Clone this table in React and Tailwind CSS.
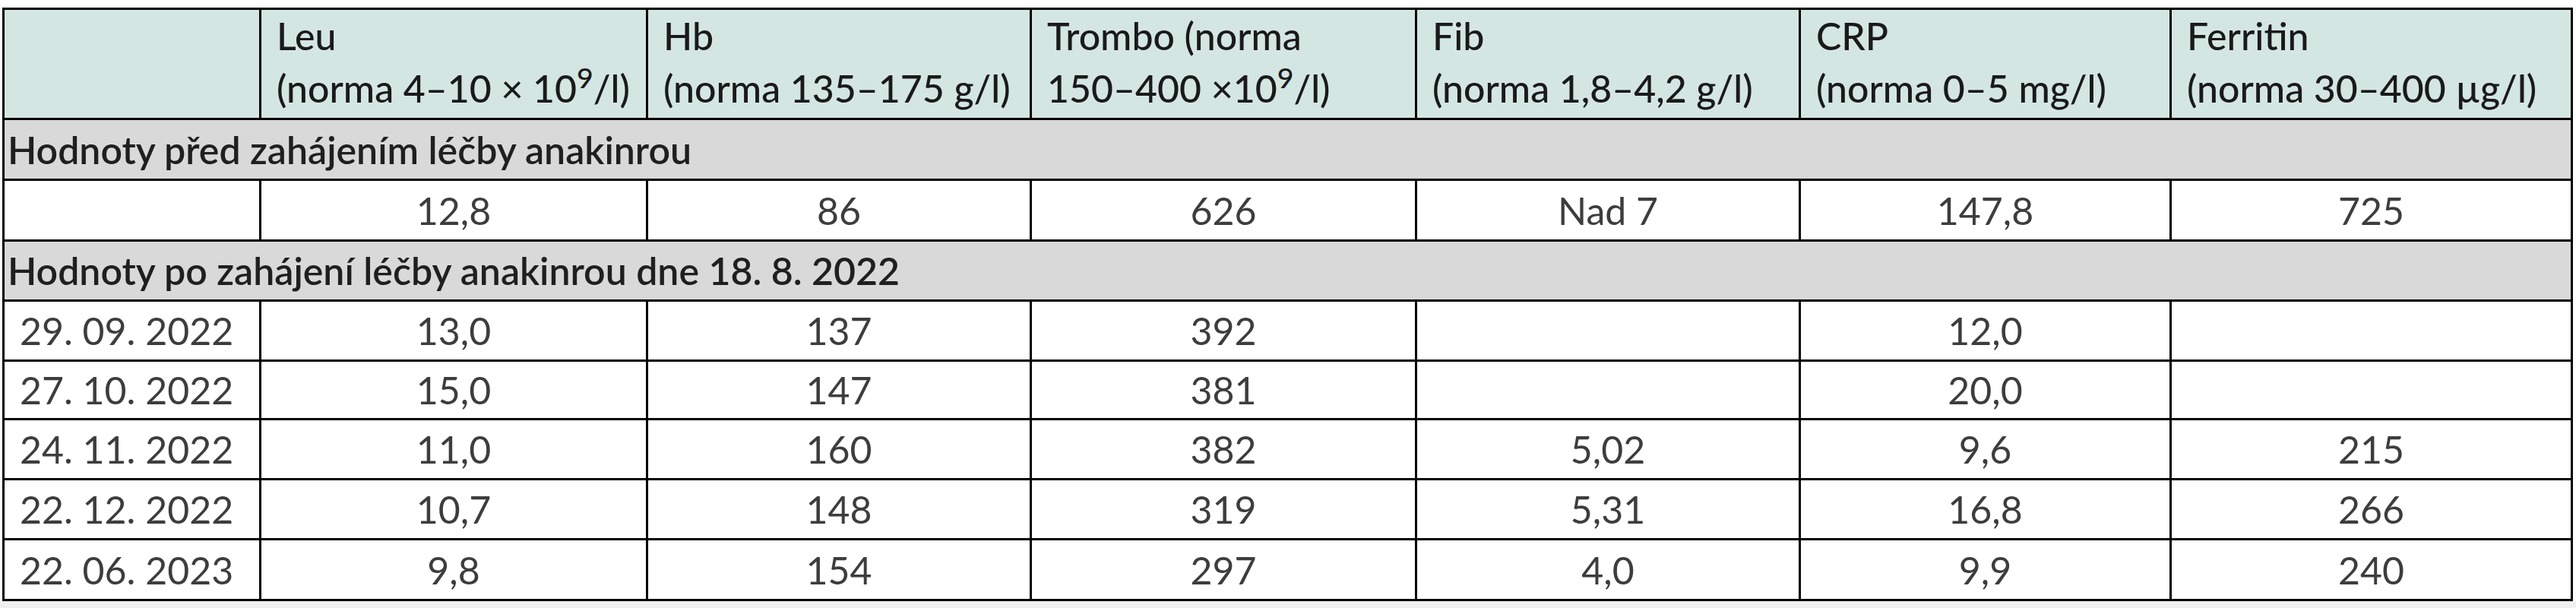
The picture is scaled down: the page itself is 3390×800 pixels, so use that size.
import React from "react";

const headers = [
  { title: "", sub: "" },
  { title: "Leu", sub: <>(norma 4–10 × 10<sup>9</sup>/l)</> },
  { title: "Hb", sub: "(norma 135–175 g/l)" },
  { title: "Trombo (norma", sub: <>150–400 ×10<sup>9</sup>/l)</> },
  { title: "Fib", sub: "(norma 1,8–4,2 g/l)" },
  { title: "CRP", sub: "(norma 0–5 mg/l)" },
  { title: "Ferritin", sub: "(norma 30–400 µg/l)" },
];

const colWidths = ["w-[338px]", "w-[509px]", "w-[505px]", "w-[507px]", "w-[505px]", "w-[488px]", "w-[528px]"];

const afterRows = [
  { h: "h-[79px]", cells: ["29. 09. 2022", "13,0", "137", "392", "", "12,0", ""] },
  { h: "h-[77px]", cells: ["27. 10. 2022", "15,0", "147", "381", "", "20,0", ""] },
  { h: "h-[79px]", cells: ["24. 11. 2022", "11,0", "160", "382", "5,02", "9,6", "215"] },
  { h: "h-[79px]", cells: ["22. 12. 2022", "10,7", "148", "319", "5,31", "16,8", "266"] },
  { h: "h-[80px]", cells: ["22. 06. 2023", "9,8", "154", "297", "4,0", "9,9", "240"] },
];

function DataRow({ cells, h }) {
  return (
    <tr className={h}>
      {cells.map((c, i) => (
        <td
          key={i}
          className={
            "border-[3px] border-black p-0 align-middle text-[50px] leading-none text-[#3d3d3d] " +
            (i === 0 ? "pl-5 text-left" : "text-center")
          }
        >
          {c}
        </td>
      ))}
    </tr>
  );
}

function SectionRow({ text, h }) {
  return (
    <tr className={h}>
      <td
        colSpan={7}
        className="border-[3px] border-black bg-[#d9d9d9] p-0 pl-1 align-middle text-[50px] leading-none font-semibold text-[#1f1f1f]"
      >
        {text}
      </td>
    </tr>
  );
}

export default function App() {
  return (
    <div className="flex h-[800px] w-[3390px] flex-col bg-white font-['Lato','Liberation_Sans',sans-serif]">
      <div className="pl-[3px] pt-[10px]">
        <table className="w-[3380px] table-fixed border-collapse">
          <colgroup>
            {colWidths.map((w, i) => (
              <col key={i} className={w} />
            ))}
          </colgroup>
          <thead>
            <tr className="h-[145px]">
              {headers.map((hd, i) => (
                <th
                  key={i}
                  className="border-[3px] border-black bg-[#d4e6e2] p-0 pl-5 text-left align-top text-[50px] leading-[69px] font-medium text-[#1a1a1a]"
                >
                  {hd.title}
                  <br />
                  {hd.sub}
                </th>
              ))}
            </tr>
          </thead>
          <tbody>
            <SectionRow h="h-[80px]" text="Hodnoty před zahájením léčby anakinrou" />
            <DataRow h="h-[80px]" cells={["", "12,8", "86", "626", "Nad 7", "147,8", "725"]} />
            <SectionRow h="h-[79px]" text="Hodnoty po zahájení léčby anakinrou dne 18. 8. 2022" />
            {afterRows.map((r, i) => (
              <DataRow key={i} h={r.h} cells={r.cells} />
            ))}
          </tbody>
        </table>
      </div>
      <div className="flex-1 bg-[#f0f0f0]" />
    </div>
  );
}
